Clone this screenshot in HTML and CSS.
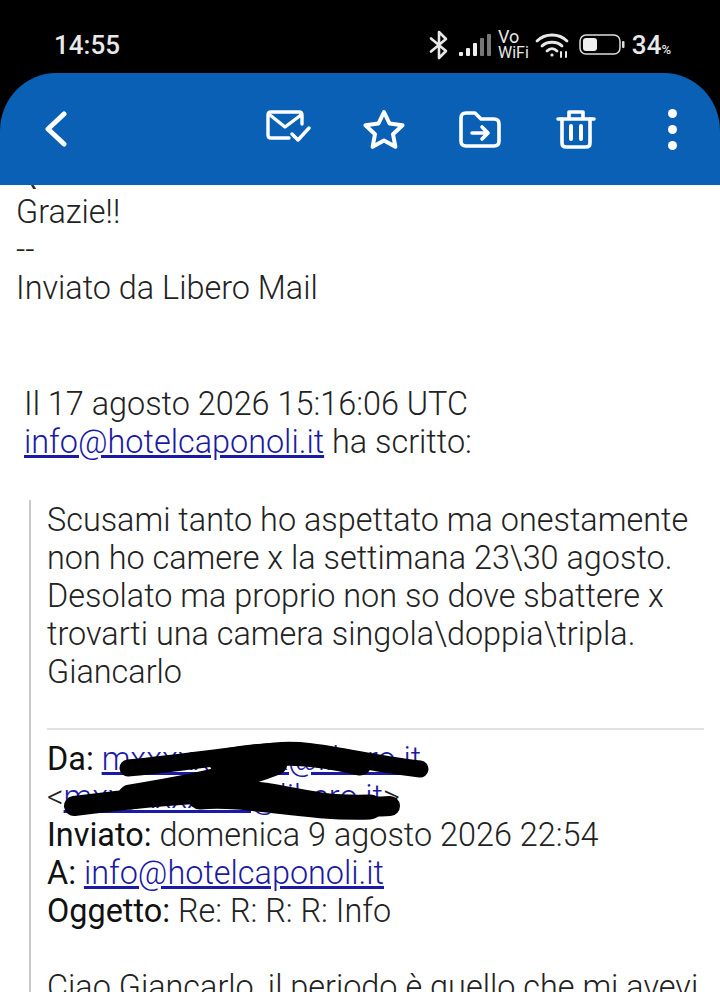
FILE: index.html
```html
<!DOCTYPE html>
<html lang="it">
<head>
    <meta charset="UTF-8">
    <title>Libero Mail</title>
    <link rel="stylesheet" href="styles.css">
</head>
<body>
    <div class="top">
        <div class="status-bar">
            <span class="clock">14:55</span>
            <div class="status-icons">
                <svg width="20" height="30" viewBox="0 0 20 30" fill="none" stroke="#e8e8e8" stroke-width="2.600" stroke-linecap="round" stroke-linejoin="round"><path d="M2 8.500 17 21 10 28V2l7 7L2 21.500"/></svg>
                <svg class="ic-signal" width="33" height="26" viewBox="0 0 33 26"><rect x="0" y="20" width="4" height="4" rx="1" fill="#eee"/><rect x="7" y="16" width="4" height="8" rx="1" fill="#eee"/><rect x="14" y="11" width="4" height="13" rx="1" fill="#eee"/><rect x="21" y="6" width="4" height="18" rx="1" fill="#777"/><rect x="28" y="2" width="4" height="22" rx="1" fill="#777"/></svg>
                <div class="vowifi"><span class="vo">Vo</span><span>WiFi</span></div>
                <svg class="ic-wifi" width="34" height="26" viewBox="0 0 34 26" fill="none" stroke="#e8e8e8" stroke-width="2.800" stroke-linecap="round"><path d="M2 9C10 1 24 1 32 9"/><path d="M7 14C12 9 22 9 27 14"/><path d="M12 19C15 16 19 16 22 19"/><circle cx="17" cy="23" r="1.600" fill="#e8e8e8" stroke="none"/><path d="M26 20v5M31 20v5" stroke-width="2"/></svg>
                <svg class="ic-batt" width="46" height="24" viewBox="0 0 46 24" fill="none"><rect x="1" y="2" width="40" height="19" rx="6" stroke="#ddd" stroke-width="1.500"/><rect x="4" y="5" width="14" height="13" rx="3" fill="#eee"/><rect x="43" y="8" width="2.500" height="7" rx="1" fill="#ddd"/></svg>
                <span class="batt-num">34<small>%</small></span>
            </div>
        </div>

        <div class="toolbar">
            <svg class="back" width="24" height="36" viewBox="0 0 24 36" fill="none" stroke="#fff" stroke-width="5" stroke-linecap="round" stroke-linejoin="round"><path d="M20 3 4 18l16 15"/></svg>
            <div class="actions">
                <div class="action action-mail"><svg width="46" height="34" viewBox="0 0 46 34" fill="none" stroke="#fff" stroke-width="3.400" stroke-linecap="round" stroke-linejoin="round"><path d="M24 29H6q-3 0-3-3V6q0-3 3-3h28q3 0 3 3v9"/><path d="M5 6l15 12L36 6"/><path d="M27 25l6 6 11-12"/></svg></div>
                <div class="action"><svg width="42" height="40" viewBox="0 0 42 40" fill="none" stroke="#fff" stroke-width="4" stroke-linejoin="round"><path d="M21 3l5.500 11.500 13 1.700-9.500 9 2.400 12.600L21 31.600 9.600 37.800 12 25.200l-9.500-9 13-1.700z"/></svg></div>
                <div class="action"><svg width="42" height="38" viewBox="0 0 42 38" fill="none" stroke="#fff" stroke-width="3.600" stroke-linecap="round" stroke-linejoin="round"><path d="M2 8q0-5 5-5h9l6 6h13q5 0 5 5v17q0 5-5 5H7q-5 0-5-5z"/><path d="M13 23h16M23 17l6 6-6 6"/></svg></div>
                <div class="action"><svg width="40" height="40" viewBox="0 0 40 40" fill="none" stroke="#fff" stroke-width="3.600" stroke-linecap="round" stroke-linejoin="round"><path d="M2 10h36"/><path d="M13 9V3h14v6"/><path d="M6 10v24q0 4 4 4h20q4 0 4-4V10"/><path d="M15 17v13M25 17v13" stroke-width="4"/></svg></div>
                <div class="action"><div class="kebab"><i></i><i></i><i></i></div></div>
            </div>
        </div>
    </div>
    <span class="clipped-tail"></span>

    <div class="mail">
        <p>Grazie!!<br>--<br>Inviato da Libero Mail</p>

        <p class="reply-head">Il 17 agosto 2026 15:16:06 UTC<br><a href="#">info@hotelcaponoli.it</a> ha scritto:</p>

        <blockquote>
            <p>Scusami tanto ho aspettato ma onestamente non ho camere x la settimana 23\30 agosto. Desolato ma proprio non so dove sbattere x trovarti una camera singola\doppia\tripla.<br>Giancarlo</p>

            <div class="orig-head">
                <!-- the local part is crossed out in the reference, so it stays a placeholder -->
                <p><b>Da:</b> <a href="#">mxxxxxxxxxx@libero.it</a><br>
                &lt;<a href="#">mxxxxxxxxxx@libero.it</a>&gt;<br>
                <b>Inviato:</b> domenica 9 agosto 2026 22:54<br>
                <b>A:</b> <a href="#">info@hotelcaponoli.it</a><br>
                <b>Oggetto:</b> Re: R: R: R: Info</p>
            </div>

            <p class="orig-body">Ciao Giancarlo, il periodo è quello che mi avevi</p>
        </blockquote>
    </div>

    <!-- pen scribble over the address -->
    <svg class="scribble" width="400" height="100" viewBox="0 0 400 100" fill="none" stroke="#000" stroke-linecap="round" stroke-linejoin="round">
        <path d="M78 33C115 30 165 22 225 16C265 12 300 26 370 34" stroke-width="17"/>
        <path d="M170 26C220 16 260 17 310 29" stroke-width="23"/>
        <path d="M225 28C190 42 130 54 80 62" stroke-width="25"/>
        <path d="M24 71C70 65 130 59 190 56C230 55 270 75 340 71" stroke-width="20"/>
        <path d="M150 62C200 58 250 74 320 72" stroke-width="25"/>
    </svg>
</body>
</html>
```

FILE: styles.css
```css
html, body {
    height: 100%;
}

body {
    margin: 0;
    position: relative;
    overflow: hidden;
    background-color: white;
    color: #222;
    font-family: Roboto, "Liberation Sans", sans-serif;
}

.top {
    background-color: black;
}

/* Status bar */
.status-bar {
    height: 73px;
    color: #e8e8e8;
    display: flex;
    align-items: center;
    justify-content: space-between;
    padding: 17px 49px 0 54px;
    box-sizing: border-box;
}

.clock {
    font-size: 26px;
    font-weight: 500;
}

.status-icons {
    display: flex;
    align-items: center;
    gap: 7px;
}

.vowifi {
    display: flex;
    flex-direction: column;
    font-size: 16px;
    line-height: 16px;
    margin-left: -1px;
}

.vo {
    font-size: 18px;
}

.ic-signal {
    margin-left: 3px;
}

.ic-wifi {
    margin-left: -1px;
}

.ic-batt {
    margin-left: 3px;
}

.batt-num {
    font-size: 26px;
    font-weight: 500;
}

.batt-num small {
    font-size: 13px;
}

/* Toolbar */
.toolbar {
    height: 112px;
    background-color: #0a60b5;
    border-radius: 56px 56px 0 0 / 58px 58px 0 0;
    display: flex;
    align-items: center;
    justify-content: space-between;
    padding-left: 44px;
}

.actions {
    display: flex;
    align-items: center;
}

.action {
    width: 96px;
    display: flex;
    justify-content: center;
}

.action-mail {
    margin-top: -6px;
}

.kebab {
    display: flex;
    flex-direction: column;
    gap: 7px;
}

.kebab i {
    width: 9px;
    height: 9px;
    border-radius: 50%;
    background-color: white;
}

/* tail of a letter scrolled under the toolbar */
.clipped-tail {
    position: absolute;
    left: 32px;
    top: 185px;
    width: 3px;
    height: 4px;
    background-color: #333;
    transform: skewX(30deg);
}

/* Mail body */
.mail {
    padding: 8px 16px 0;
    font-size: 32.4px;
    font-weight: 300;
    line-height: 38px;
}

.mail p {
    margin: 0;
}

.mail a {
    color: #1a1aa6;
}

.mail b {
    font-weight: 400;
    color: #111;
}

.reply-head {
    padding: 78px 8px 0;
}

blockquote {
    margin: 39px 0 0 13px;
    padding: 1px 0 0 16px;
    border-left: 2px solid #c8c8c8;
}

.orig-head {
    margin-top: 37px;
    padding-top: 10px;
    border-top: 2px solid #e2e2e2;
}

.mail .orig-body {
    margin-top: 38px;
    white-space: nowrap;
}

.scribble {
    position: absolute;
    left: 50px;
    top: 735px;
}
```
